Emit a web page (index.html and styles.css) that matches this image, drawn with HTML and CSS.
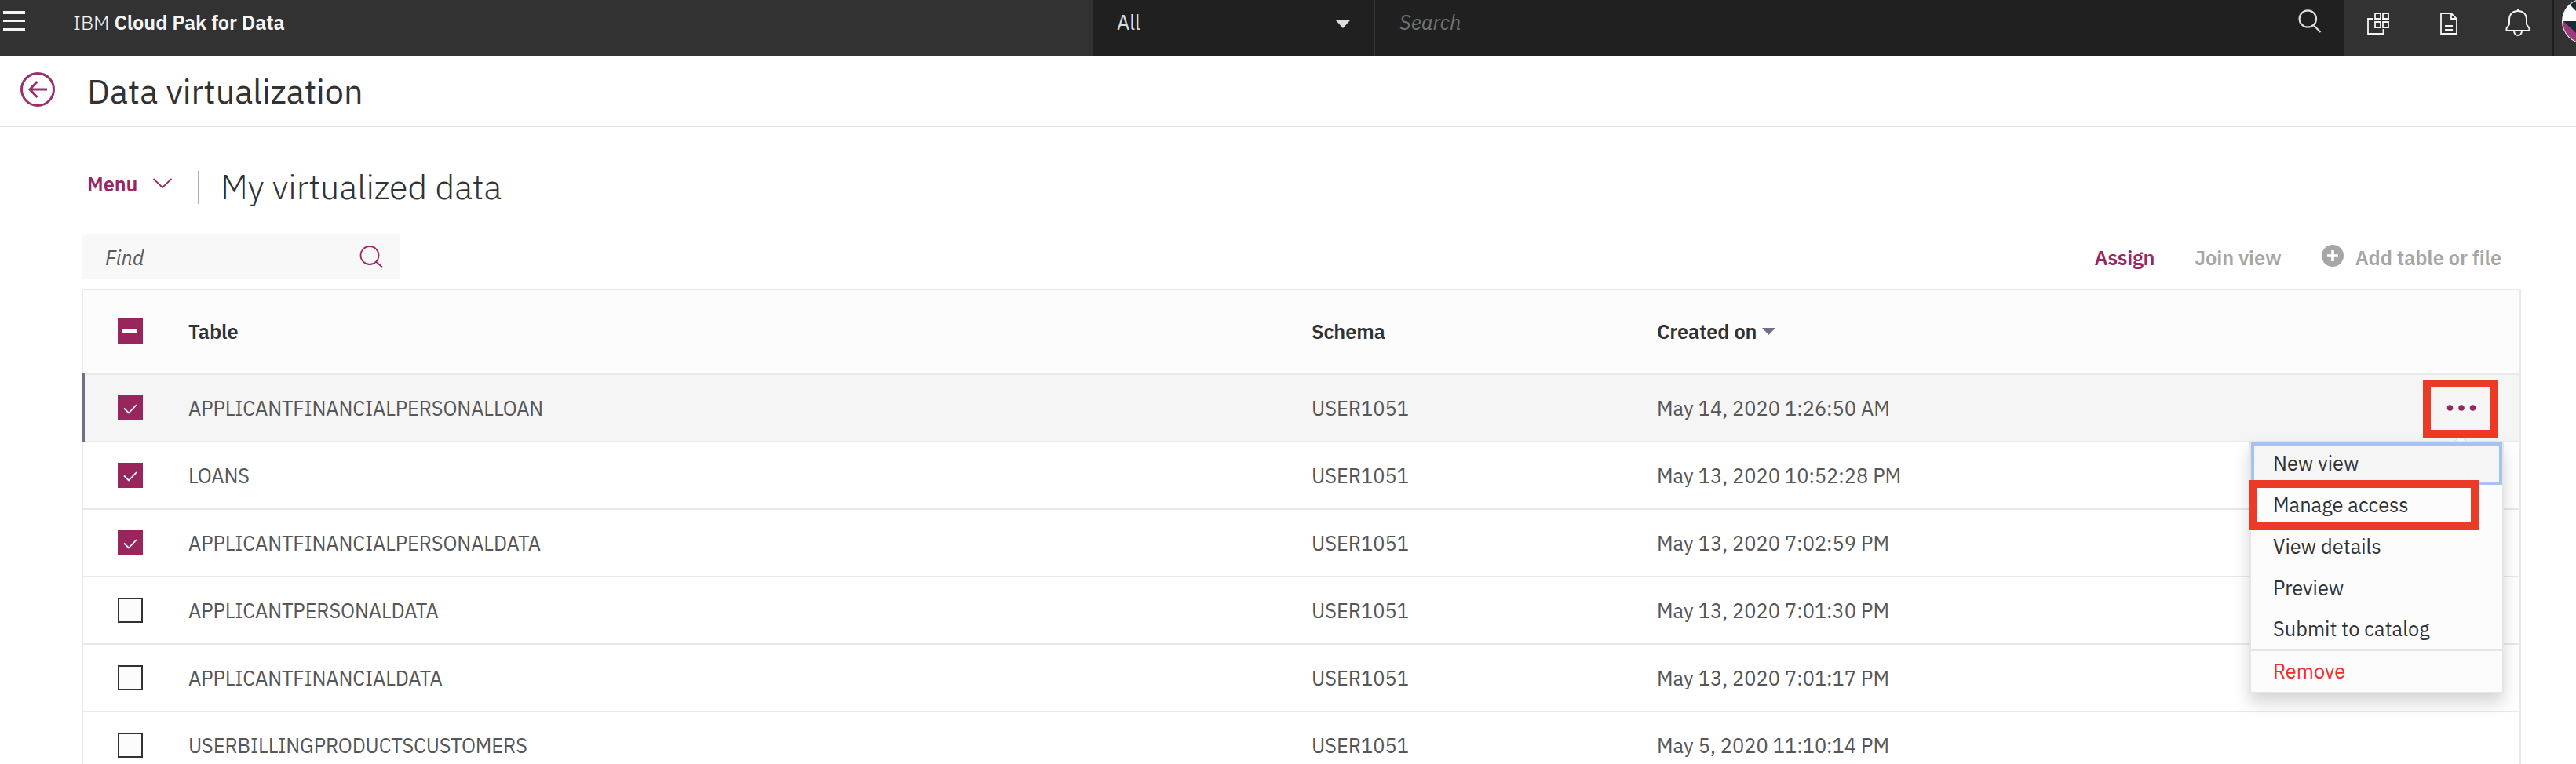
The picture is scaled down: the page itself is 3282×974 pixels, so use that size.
FILE: index.html
```html
<!DOCTYPE html>
<html lang="en">
<head>
<meta charset="utf-8">
<title>Data virtualization</title>
<link rel="stylesheet" href="styles.css">
</head>
<body>
<header class="topbar">
  <div class="burger"><i></i><i class="thin"></i><i></i></div>
  <div class="brand">IBM <b>Cloud Pak for Data</b></div>
  <div class="scope"><span>All</span><svg width="18" height="10" viewBox="0 0 18 10"><path d="M0 0H18L9 10Z" fill="#dcdcdc"/></svg></div>
  <div class="search"><span>Search</span>
    <svg width="30" height="32" viewBox="0 0 30 32" fill="none" stroke="#dedede" stroke-width="2.200"><circle cx="12.300" cy="13" r="10.700"/><path d="M20 21.500L28.500 30"/></svg></div>
  <nav class="tools">
    <svg class="apps" width="28" height="28" viewBox="0 0 28 28" fill="none" stroke="#f4f4f4" stroke-width="1.800"><path d="M7 8H1V27H20.500V21M10 1H17V8H10ZM20 1H27V8H20ZM10 12H17V19H10ZM20 12H27V19H20Z"/></svg>
    <svg class="doc" width="22" height="28" viewBox="0 0 22 28" fill="none" stroke="#f4f4f4" stroke-width="1.800"><path d="M1 1H14L21 8V27H1ZM14 1V8H21M6 17H16M6 22H16"/></svg>
    <svg class="bell" width="32" height="36" viewBox="0 0 32 36" fill="none" stroke="#f4f4f4" stroke-width="2"><path d="M16 0V3M1.500 28V25L5 20V14C5 7 9.500 3 16 3S27 7 27 14V20L30.500 25V28ZM11 28C11 36 21 36 21 28"/></svg>
  </nav>
  <div class="user"><svg width="18" height="60" viewBox="0 0 18 60"><defs><clipPath id="disc"><circle cx="29" cy="27" r="28"/></clipPath></defs><circle cx="29" cy="27" r="29" fill="#fff"/><g clip-path="url(#disc)"><path d="M0 27H18V60H0Z" fill="#9b3a78"/><path d="M2 27H18V42Z" fill="#182a33"/><path d="M9 5L18 14V-2H9Z" fill="#182a33"/></g></svg></div>
</header>
<div class="titlebar">
  <svg width="44" height="44" viewBox="0 0 44 44" fill="none" stroke="#9b2f6c" stroke-width="3"><circle cx="22" cy="22" r="20.500"/><path d="M34 22H12M21.500 12L12 22L21.500 32"/></svg>
  <h1>Data virtualization</h1>
</div>
<main>
  <div class="crumb">
    <span class="menu-link">Menu</span>
    <svg width="26" height="14" viewBox="0 0 26 14" fill="none" stroke="#9b2660" stroke-width="1.800"><path d="M1.500 1L13 12L24.500 1"/></svg>
    <h2>My virtualized data</h2>
  </div>
  <div class="actions">
    <div class="find"><span>Find</span>
      <svg width="31" height="29" viewBox="0 0 31 29" fill="none" stroke="#9b2660" stroke-width="1.800"><circle cx="13" cy="12.500" r="11.500"/><path d="M21 20.500L29.500 28"/></svg></div>
    <span class="assign">Assign</span>
    <span class="join">Join view</span>
    <svg class="plus" width="28" height="28" viewBox="0 0 28 28"><circle cx="14" cy="14" r="14" fill="#a6a6a6"/><path d="M14 7V21M7 14H21" stroke="#fff" stroke-width="3.600"/></svg>
    <span class="add">Add table or file</span>
  </div>
  <section class="table">
    <div class="row head"><span class="box part"><i></i></span><b>Table</b><b>Schema</b><b>Created on<svg class="sort" width="17" height="9" viewBox="0 0 17 9"><path d="M0 0H17L8.500 9Z" fill="#6f7088"/></svg></b></div>
    <div class="row active"><span class="box on"><svg width="18" height="13" viewBox="0 0 18 13"><path d="M1 5.500L7 11.500L17 1"/></svg></span><span class="name">APPLICANTFINANCIALPERSONALLOAN</span><span>USER1051</span><span>May 14, 2020 1:26:50 AM</span>
      <div class="more"><svg width="38" height="8" viewBox="0 0 38 8" fill="#98265f"><circle cx="4.500" cy="4" r="3.800"/><circle cx="19" cy="4" r="3.800"/><circle cx="33.500" cy="4" r="3.800"/></svg></div></div>
    <div class="row"><span class="box on"><svg width="18" height="13" viewBox="0 0 18 13"><path d="M1 5.500L7 11.500L17 1"/></svg></span><span class="name">LOANS</span><span>USER1051</span><span>May 13, 2020 10:52:28 PM</span></div>
    <div class="row"><span class="box on"><svg width="18" height="13" viewBox="0 0 18 13"><path d="M1 5.500L7 11.500L17 1"/></svg></span><span class="name">APPLICANTFINANCIALPERSONALDATA</span><span>USER1051</span><span>May 13, 2020 7:02:59 PM</span></div>
    <div class="row"><span class="box"></span><span class="name">APPLICANTPERSONALDATA</span><span>USER1051</span><span>May 13, 2020 7:01:30 PM</span></div>
    <div class="row"><span class="box"></span><span class="name">APPLICANTFINANCIALDATA</span><span>USER1051</span><span>May 13, 2020 7:01:17 PM</span></div>
    <div class="row"><span class="box"></span><span class="name">USERBILLINGPRODUCTSCUSTOMERS</span><span>USER1051</span><span>May 5, 2020 11:10:14 PM</span></div>
  </section>
</main>
<svg class="notch" width="20" height="10" viewBox="0 0 20 10"><path d="M0 10L10 0L20 10Z" fill="#fcfcfc" stroke="#e4e4e4" stroke-width="1.500"/></svg>
<ul class="menu">
  <li class="focus">New view</li>
  <li>Manage access</li>
  <li>View details</li>
  <li>Preview</li>
  <li>Submit to catalog</li>
  <li class="danger">Remove</li>
</ul>
<div class="mark mark-more"></div>
<div class="mark mark-manage"></div>
</body>
</html>
```
FILE: styles.css
```css
* { box-sizing: border-box; }
body {
  margin: 0;
  width: 3282px;
  height: 974px;
  overflow: hidden;
  position: relative;
  background: #fff;
  color: #323232;
  font: 25.4px/33px "IBM Plex Sans", Roboto, sans-serif;
}
svg { display: block; flex: none; }
h1, h2 { margin: 0; font-size: 43.2px; line-height: 52px; }
b, .menu-link, .assign, .join, .add { font-weight: 600; white-space: nowrap; letter-spacing: -0.1px; }

/* Top bar */
.topbar { display: flex; height: 72px; background: #323232; color: #f4f4f4; }
.burger { width: 32px; padding: 14px 0 0 4px; display: flex; flex-direction: column; gap: 8px; }
.burger i { height: 4px; background: #f4f4f4; }
.burger .thin { height: 2px; }
.brand { width: 1360px; padding: 12px 0 0 61px; font-weight: 300; }
.scope {
  width: 360px;
  padding: 12px 30px 0 31px;
  display: flex;
  justify-content: space-between;
  background: #202020;
  border-right: 2px solid #363636;
  color: #dcdcdc;
}
.scope svg { margin-top: 14px; }
.search {
  width: 1234px;
  padding: 12px 28px 0 31px;
  display: flex;
  justify-content: space-between;
  background: #202020;
  color: #727272;
  font-style: italic;
}
.search svg { margin-top: -1px; }
.tools { width: 268px; display: flex; border-right: 2px solid #1e1e1e; }
.apps { margin: 16px 0 0 30px; }
.doc { margin: 16px 0 0 65px; }
.bell { margin: 11px 0 0 61px; }
.user { padding-left: 10px; }

/* Page title */
.titlebar { display: flex; height: 90px; padding-left: 26px; border-bottom: 2px solid #e0e0e0; }
.titlebar svg { margin-top: 20px; }
h1 { margin: 18px 0 0 41px; font-weight: 400; }

/* View switcher */
.crumb { display: flex; height: 136px; padding: 56px 0 0 111px; color: #9b2660; }
.menu-link { width: 83px; }
.crumb svg { margin-top: 9px; }
h2 {
  height: 42px;
  margin-left: 32px;
  padding-left: 27px;
  border-left: 2px solid #adadad;
  color: #323232;
  font-weight: 300;
  line-height: 40px;
}

/* Toolbar */
.actions { display: flex; height: 70px; }
.find {
  width: 406px;
  height: 58px;
  margin-left: 104px;
  padding: 14px 21px 0 30px;
  display: flex;
  justify-content: space-between;
  background: #f8f8f8;
  color: #5a5a5a;
  font-style: italic;
}
.find svg { margin-top: 1px; }
.assign { margin: 14px 0 0 auto; color: #9b2660; letter-spacing: -0.2px; }
.join { margin: 14px 0 0 51px; color: #a6a6a6; }
.plus { margin: 14px 0 0 51px; }
.add { margin: 14px 95px 0 15px; color: #a6a6a6; }

/* Table */
.table { margin: 0 70px 0 104px; border: 2px solid #e9e9e9; height: 640px; }
.row {
  display: grid;
  grid-template-columns: 90px 1431px 440px 975px 1fr;
  align-items: center;
  height: 86px;
  padding-left: 44px;
  border-bottom: 2px solid #e9e9e9;
  color: #565656;
  position: relative;
}
.row > span:not(.box) { padding-top: 1px; }
.row .name { letter-spacing: -0.12px; }
.head { height: 108px; background: #fcfcfc; color: #323232; }
.head b { display: flex; padding-bottom: 1px; }
.sort { margin: 12px 0 0 7px; }
.active { background: #f5f5f5; }
.active::before {
  content: "";
  position: absolute;
  left: -2px;
  top: -2px;
  bottom: -2px;
  width: 4px;
  background: #6f7088;
}
.box { width: 32px; height: 32px; border: 2px solid #323232; background: #fcfcfc; }
.head .box { margin-top: -2px; }
.on, .part { border: 0; background: #98265c; }
.part { padding: 14px 0 0 6px; }
.part i { display: block; width: 18px; height: 4px; background: #fff; }
.on svg { margin: 11px 0 0 7px; fill: none; stroke: #fff; stroke-width: 1.8; }
.more { padding-left: 31px; }

/* Row menu */
.menu {
  position: absolute;
  left: 2866px;
  top: 562px;
  width: 324px;
  height: 322px;
  margin: 0;
  padding: 0;
  list-style: none;
  background: #fcfcfc;
  border: 2px solid #e6e6e6;
  box-shadow: 0 12px 20px rgba(0, 0, 0, 0.17);
}
.menu li { height: 52.7px; padding: 9.3px 0 0 28px; }
.menu .focus { height: 54px; padding: 6px 0 0 24px; border: 4px solid #a6c1f3; background: #f5f5f5; }
.menu .danger { margin-top: -0.8px; padding-top: 9.5px; border-top: 2px solid #e6e6e6; color: #ee2f29; }
.notch { position: absolute; left: 3125px; top: 555px; }

/* Highlight frames */
.mark { position: absolute; border: 10px solid #eb3b26; }
.mark-more { left: 3087px; top: 484px; width: 95px; height: 74px; }
.mark-manage { left: 2866px; top: 612px; width: 292px; height: 64px; }
```
